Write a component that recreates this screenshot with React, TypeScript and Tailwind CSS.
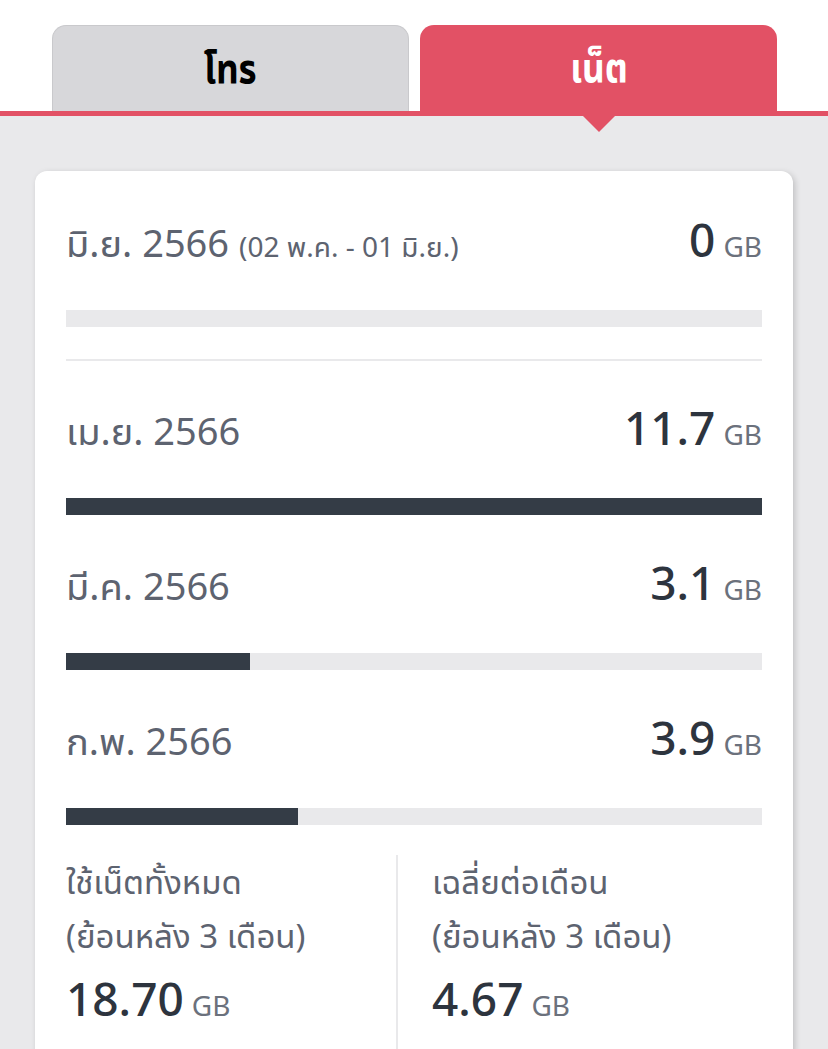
import React from "react";

const font = { fontFamily: '"Noto Sans", "Noto Sans Thai UI", "Noto Sans Thai", sans-serif' };

function Row({ label, sub, value, pct }: { label: string; sub?: string; value: string; pct: number }) {
  return (
    <div>
      <div className="flex items-baseline justify-between h-[48px] leading-[42px]">
        <div className="text-[38px] text-[#5d6370]">
          {label}
          {sub && <span className="text-[28px] ml-[10px]">{sub}</span>}
        </div>
        <div className="flex items-baseline">
          <span className="text-[46px] font-medium text-[#2d343e]">{value}</span>
          <span className="text-[28px] text-[#6b717c] ml-[8px]">GB</span>
        </div>
      </div>
      <div className="mt-[44px] h-[17px] bg-[#e9e9eb] flex">
        <div className="h-full bg-[#343c46]" style={{ width: `${pct}%` }} />
      </div>
    </div>
  );
}

export default function App() {
  return (
    <div className="w-[828px] h-[1049px] overflow-hidden bg-[#e9e9eb]" style={font}>
      <div className="bg-white pt-[25px] flex gap-[11px] pl-[52px] border-b-[5px] border-[#e25165]">
        <div className="w-[357px] h-[86px] rounded-t-[14px] bg-[#d7d7da] border border-b-0 border-[#c9c9cc] flex items-center justify-center text-black">
          <span className="inline-block text-[44px] font-bold scale-x-[0.8] -mt-[6px]">โทร</span>
        </div>
        <div className="w-[357px] h-[86px] rounded-t-[14px] bg-[#e25165] flex items-center justify-center text-white relative">
          <span className="inline-block text-[44px] font-bold scale-x-[0.8] -mt-[6px]">เน็ต</span>
          <div className="absolute left-1/2 -translate-x-1/2 top-[91px] w-0 h-0 border-l-[16px] border-r-[16px] border-t-[16px] border-l-transparent border-r-transparent border-t-[#e25165]" />
        </div>
      </div>
      <div className="px-[35px] pt-[55px]">
        <div className="bg-white rounded-[12px] shadow-[2px_2px_6px_rgba(0,0,0,0.18)] px-[31px] pt-[47px]">
          <Row label="มิ.ย. 2566" sub="(02 พ.ค. - 01 มิ.ย.)" value="0" pct={0} />
          <div className="mt-[32px] h-[2px] bg-[#e9e9eb]" />
          <div className="mt-[45px] flex flex-col gap-[46px]">
            <Row label="เม.ย. 2566" value="11.7" pct={100} />
            <Row label="มี.ค. 2566" value="3.1" pct={26.5} />
            <Row label="ก.พ. 2566" value="3.9" pct={33.3} />
          </div>
          <div className="mt-[30px] flex pb-[10px]">
            <div className="w-[332px] border-r-[2px] border-[#e9e9eb] pb-[10px]">
              <div className="text-[33px] leading-[54px] text-[#5d6370]">ใช้เน็ตทั้งหมด</div>
              <div className="text-[33px] leading-[54px] text-[#5d6370]">(ย้อนหลัง 3 เดือน)</div>
              <div className="flex items-baseline leading-[70px]">
                <span className="text-[46px] font-medium text-[#2d343e]">18.70</span>
                <span className="text-[28px] text-[#6b717c] ml-[8px]">GB</span>
              </div>
            </div>
            <div className="pl-[34px]">
              <div className="text-[33px] leading-[54px] text-[#5d6370]">เฉลี่ยต่อเดือน</div>
              <div className="text-[33px] leading-[54px] text-[#5d6370]">(ย้อนหลัง 3 เดือน)</div>
              <div className="flex items-baseline leading-[70px]">
                <span className="text-[46px] font-medium text-[#2d343e]">4.67</span>
                <span className="text-[28px] text-[#6b717c] ml-[8px]">GB</span>
              </div>
            </div>
          </div>
        </div>
      </div>
    </div>
  );
}
